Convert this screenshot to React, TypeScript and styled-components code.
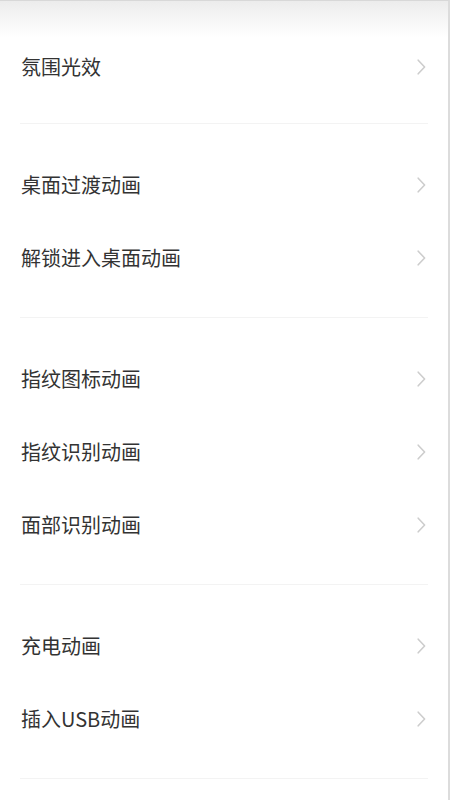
import React, { FC } from 'react'
import styled, { createGlobalStyle } from 'styled-components'

const GlobalStyle = createGlobalStyle`
  html, body {
    margin: 0;
    padding: 0;
    background: #ffffff;
  }
  body {
    font-family: "Noto Sans CJK SC", "Noto Sans", "Liberation Sans", sans-serif;
  }
`

const Page = styled.div`
  width: 450px;
  min-height: 800px;
  background: #ffffff;
  box-sizing: border-box;
  border-top: 1px solid #d8d8d8;
  border-right: 2px solid #dcdcdc;
  background-image: linear-gradient(to bottom, #ececec 0px, #f6f6f6 18px, #ffffff 36px);
  background-repeat: no-repeat;
  padding-top: 29px;
`

const Group = styled.section<{ first?: boolean }>`
  padding: ${p => (p.first ? '0 0 20px' : '24px 0 23px')};
  margin: 0 20px;
  border-bottom: 1px solid #f3f3f3;
`

const Row = styled.div`
  height: 73px;
  display: flex;
  align-items: center;
  justify-content: space-between;
  padding: 0 1px 0 1px;
  cursor: pointer;
`

const Label = styled.span`
  font-size: 20px;
  color: #333333;
  letter-spacing: 0;
  line-height: 1;
`

const Chevron = styled.svg`
  width: 9px;
  height: 16px;
  margin-right: 1px;
  flex: none;
`

const Arrow: FC = () => (
  <Chevron viewBox="0 0 9 16">
    <path d="M1.2 1.2 L7.6 8 L1.2 14.8" fill="none" stroke="#cdcdcd" strokeWidth="1.6" strokeLinecap="round" strokeLinejoin="round" />
  </Chevron>
)

const groups: string[][] = [
  ['氛围光效'],
  ['桌面过渡动画', '解锁进入桌面动画'],
  ['指纹图标动画', '指纹识别动画', '面部识别动画'],
  ['充电动画', '插入USB动画'],
]

const App: FC = () => (
  <>
    <GlobalStyle />
    <Page>
      {groups.map((items, i) => (
        <Group key={`group-${i}`} first={i === 0}>
          {items.map(label => (
            <Row key={label}>
              <Label>{label}</Label>
              <Arrow />
            </Row>
          ))}
        </Group>
      ))}
    </Page>
  </>
)

export default App
